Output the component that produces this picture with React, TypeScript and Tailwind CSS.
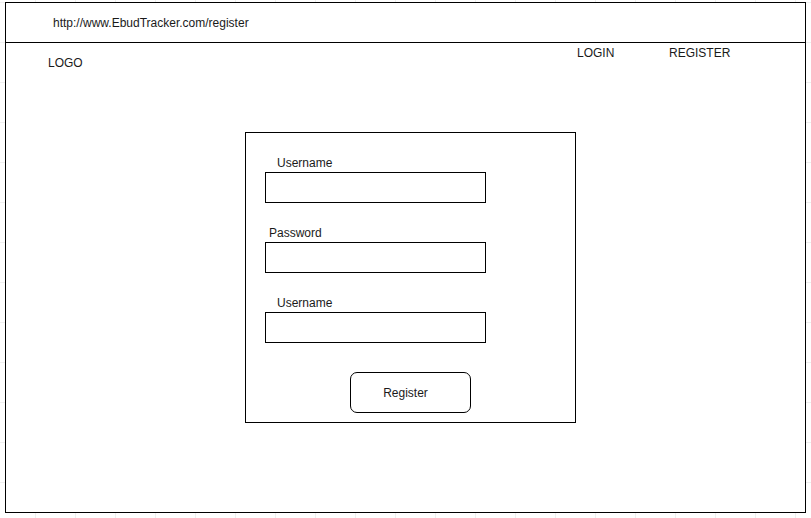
import React from "react";

const font = "font-['Liberation_Sans',Arial,sans-serif]";

const Field = ({ label, indent }: { label: string; indent: string }) => (
  <div className="flex flex-col">
    <div className={`mt-[23px] h-[14px] text-[12px] leading-[14px] text-[#1a1a1a] ${indent}`}>{label}</div>
    <div className="mt-[2px] ml-[19px] h-[31px] w-[221px] border border-black bg-white" />
  </div>
);

export default function App() {
  return (
    <div
      className={`w-[811px] h-[518px] overflow-hidden bg-white pt-[2px] pl-[5px] ${font} bg-[linear-gradient(to_right,#efefef_1px,transparent_1px),linear-gradient(to_bottom,#efefef_1px,transparent_1px)] bg-[size:40px_40px] bg-[position:35px_2px]`}
    >
      <div className="flex h-[511px] w-[801px] flex-col border border-black bg-white">
        {/* address bar */}
        <div className="flex h-[40px] items-center border-b border-black pl-[47px] text-[12px] text-[#1a1a1a]">
          http://www.EbudTracker.com/register
        </div>

        {/* header */}
        <div className="flex text-[12px] leading-[14px] text-[#1a1a1a]">
          <div className="w-[571px] pt-[13px] pl-[42px]">LOGO</div>
          <div className="w-[92px] pt-[3px]">LOGIN</div>
          <div className="pt-[3px]">REGISTER</div>
        </div>

        {/* register form */}
        <div className="mt-[62px] ml-[239px] flex h-[291px] w-[331px] flex-col border border-black">
          <Field label="Username" indent="pl-[31px]" />
          <Field label="Password" indent="pl-[23px]" />
          <Field label="Username" indent="pl-[31px]" />
          <button className="mt-[29px] ml-[104px] flex h-[41px] w-[121px] items-center justify-center rounded-[7px] border border-black bg-white pr-[10px] text-[12px] text-[#1a1a1a]">
            Register
          </button>
        </div>
      </div>
    </div>
  );
}
